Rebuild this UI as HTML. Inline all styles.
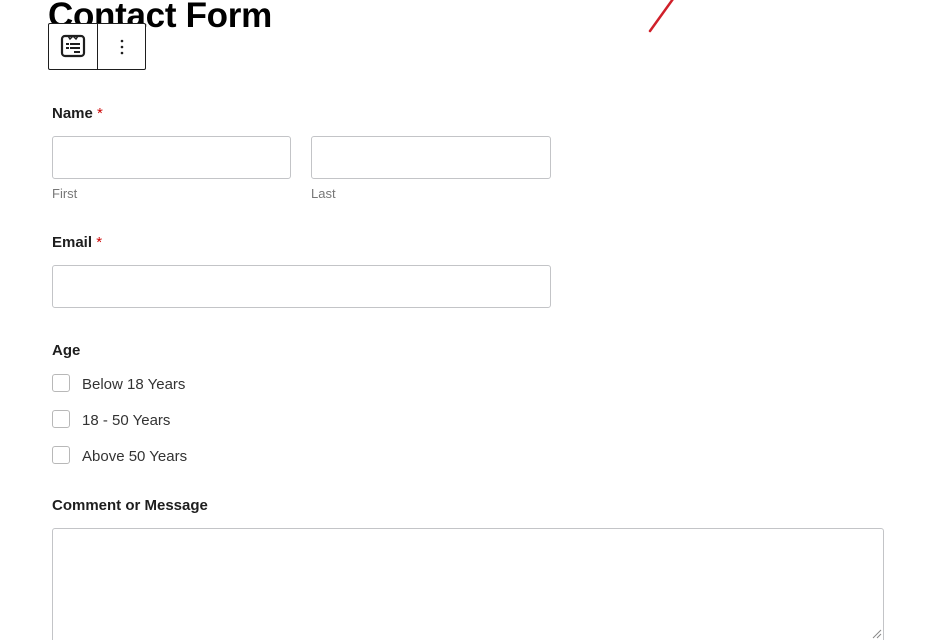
<!DOCTYPE html>
<html><head><style>
html,body{margin:0;width:931px;height:640px;overflow:hidden}
body{background:#fff;position:relative;font-family:"Liberation Sans",sans-serif;color:#1e1e1e}
.a{position:absolute}
h1{position:absolute;left:48px;top:-4px;margin:0;font-size:35px;font-weight:bold;color:#000;letter-spacing:-0.3px}
.lbl{position:absolute;font-size:15px;font-weight:bold;color:#1e1e1e}
.lbl span{color:#c00;font-weight:normal}
.in{position:absolute;border:1px solid #c3c4c7;border-radius:3px;background:#fff;box-sizing:border-box}
.sub{position:absolute;font-size:13px;color:#777}
.cb{position:absolute;left:52px;width:18px;height:18px;border:1px solid #b8b8b8;border-radius:3px;box-sizing:border-box}
.ct{position:absolute;left:82px;font-size:15px;color:#333}
</style></head><body>
<h1>Contact Form</h1>
<svg class="a" style="left:640px;top:0" width="40" height="40"><line x1="33" y1="-1" x2="10" y2="31" stroke="#d0202a" stroke-width="2.5" stroke-linecap="round"/></svg>
<div class="a" style="left:48px;top:23px;width:98px;height:47px;border:1px solid #1e1e1e;border-radius:2px;background:#fff;box-sizing:border-box"></div>
<div class="a" style="left:97px;top:23px;width:1px;height:47px;background:#1e1e1e"></div>
<svg class="a" style="left:60px;top:33px" width="26" height="26" viewBox="0 0 26 26"><rect x="2" y="3" width="22" height="20" rx="3" fill="none" stroke="#1e1e1e" stroke-width="2.2"/><path d="M8 3l2 3 3-3 3 3 2-3" fill="none" stroke="#1e1e1e" stroke-width="1.5"/><rect x="6" y="10" width="3" height="2" fill="#1e1e1e"/><rect x="10" y="10" width="10" height="2" fill="#1e1e1e"/><rect x="6" y="14" width="3" height="2" fill="#1e1e1e"/><rect x="10" y="14" width="10" height="2" fill="#1e1e1e"/><rect x="14" y="18" width="6" height="2" fill="#1e1e1e"/></svg>
<svg class="a" style="left:119px;top:38px" width="6" height="18"><circle cx="3" cy="3" r="1.3" fill="#1e1e1e"/><circle cx="3" cy="9" r="1.3" fill="#1e1e1e"/><circle cx="3" cy="15" r="1.3" fill="#1e1e1e"/></svg>

<div class="lbl" style="left:52px;top:105px">Name <span>*</span></div>
<div class="in" style="left:52px;top:136px;width:239px;height:43px"></div>
<div class="in" style="left:311px;top:136px;width:240px;height:43px"></div>
<div class="sub" style="left:52px;top:186px">First</div>
<div class="sub" style="left:311px;top:186px">Last</div>

<div class="lbl" style="left:52px;top:234px">Email <span>*</span></div>
<div class="in" style="left:52px;top:265px;width:499px;height:43px"></div>

<div class="lbl" style="left:52px;top:342px">Age</div>
<div class="cb" style="top:374px"></div><div class="ct" style="top:376px">Below 18 Years</div>
<div class="cb" style="top:410px"></div><div class="ct" style="top:412px">18 - 50 Years</div>
<div class="cb" style="top:446px"></div><div class="ct" style="top:448px">Above 50 Years</div>

<div class="lbl" style="left:52px;top:497px">Comment or Message</div>
<div class="in" style="left:52px;top:528px;width:832px;height:130px"></div>
<svg class="a" style="left:872px;top:629px" width="10" height="10"><path d="M1 9L9 1M5 9L9 5" stroke="#888" stroke-width="1"/></svg>
</body></html>
